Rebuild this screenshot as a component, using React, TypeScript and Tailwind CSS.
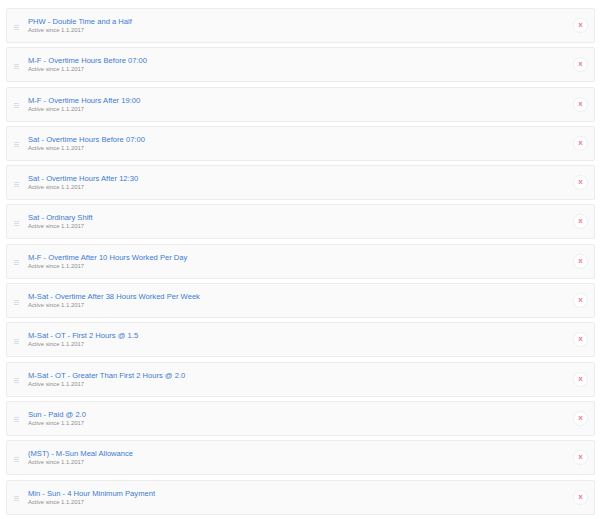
const rules = [
  "PHW - Double Time and a Half",
  "M-F - Overtime Hours Before 07:00",
  "M-F - Overtime Hours After 19:00",
  "Sat - Overtime Hours Before 07:00",
  "Sat - Overtime Hours After 12:30",
  "Sat - Ordinary Shift",
  "M-F - Overtime After 10 Hours Worked Per Day",
  "M-Sat - Overtime After 38 Hours Worked Per Week",
  "M-Sat - OT - First 2 Hours @ 1.5",
  "M-Sat - OT - Greater Than First 2 Hours @ 2.0",
  "Sun - Paid @ 2.0",
  "(MST) - M-Sun Meal Allowance",
  "Min - Sun - 4 Hour Minimum Payment",
];

const DragHandle = () => (
  <svg width="5" height="5" viewBox="0 0 5 5" className="shrink-0 mt-[3px]">
    <rect x="0" y="0" width="5" height="1" fill="#d3dee6" />
    <rect x="0" y="2" width="5" height="1" fill="#d3dee6" />
    <rect x="0" y="4" width="5" height="1" fill="#d3dee6" />
  </svg>
);

export default function App() {
  return (
    <div className="w-[602px] h-[519px] bg-white overflow-hidden font-['Liberation_Sans',Arial,sans-serif]">
      <div className="flex flex-col gap-[4.3px] pt-[8px] pl-[6px] pr-[7px]">
        {rules.map((name) => (
          <div
            key={name}
            className="h-[35px] flex items-center bg-[#fafafa] border border-[#ececec] rounded-[2px] pl-[7px] pr-[6px]"
          >
            <DragHandle />
            <div className="ml-[9px] flex flex-col">
              <span className="text-[7.6px] leading-[9px] text-[#3a7bd2]">{name}</span>
              <span className="text-[5.9px] leading-[8px] text-[#8f8f8f]">Active since 1.1.2017</span>
            </div>
            <button className="ml-auto w-[15px] h-[15px] rounded-full bg-white border border-[#efefef] flex items-center justify-center text-[8px] leading-none font-bold text-[#f47a8e] pb-[1px]">
              x
            </button>
          </div>
        ))}
      </div>
    </div>
  );
}
